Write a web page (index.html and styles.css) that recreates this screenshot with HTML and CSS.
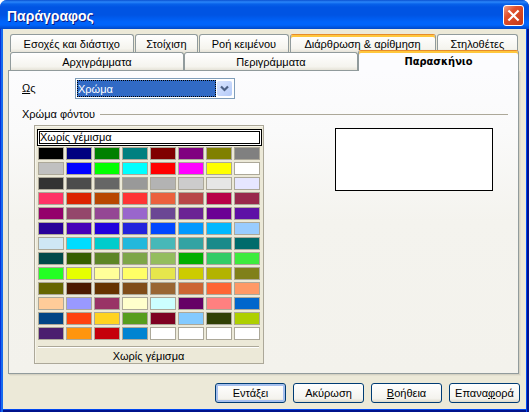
FILE: index.html
```html
<!DOCTYPE html>
<html lang="el">
<head>
<meta charset="utf-8">
<title>Παράγραφος</title>
<link rel="stylesheet" href="styles.css">
</head>
<body>
<main class="window">
  <header class="titlebar">
    <h1 class="title">Παράγραφος</h1>
    <button class="close" type="button" aria-label="Κλείσιμο">
      <svg width="19" height="19" viewBox="0 0 19 19"><path d="M5.2 5.2L13.8 13.8M13.8 5.2L5.2 13.8" stroke="#fff" stroke-width="2.2" stroke-linecap="square"/></svg>
    </button>
  </header>
  <div class="body">
    <nav class="tabs">
      <div class="tab-row">
        <button class="tab tab-indents" type="button">Εσοχές και διάστιχο</button>
        <button class="tab tab-align" type="button">Στοίχιση</button>
        <button class="tab tab-flow" type="button">Ροή κειμένου</button>
        <button class="tab tab-outline hot" type="button">Διάρθρωση &amp; αρίθμηση</button>
        <button class="tab tab-stops" type="button">Στηλοθέτες</button>
      </div>
      <div class="tab-row front">
        <button class="tab tab-wide" type="button">Αρχιγράμματα</button>
        <button class="tab tab-wide" type="button">Περιγράμματα</button>
        <button class="tab tab-active hot" type="button">Παρασκήνιο</button>
      </div>
    </nav>
    <section class="panel">
      <div class="field">
        <label for="as"><u>Ω</u>ς</label>
        <div class="combo">
          <select id="as"><option>Χρώμα</option></select>
          <span class="arrow"><svg width="9" height="7" viewBox="0 0 9 7"><path d="M1 1.5L4.5 5L8 1.5" fill="none" stroke="#4d6185" stroke-width="2.2"/></svg></span>
        </div>
      </div>
      <h2 class="group-title">Χρώμα φόντου</h2>
      <div class="group">
        <div class="palette">
          <button class="no-fill" type="button">Χωρίς γέμισμα</button>
          <div class="swatches" id="swatches"></div>
          <output class="color-name">Χωρίς γέμισμα</output>
        </div>
        <div class="preview"></div>
      </div>
    </section>
    <footer class="actions">
      <button class="btn default" type="button">Εντάξει</button>
      <button class="btn" type="button">Ακύρωση</button>
      <button class="btn" type="button"><u>Β</u>οήθεια</button>
      <button class="btn" type="button">Επανα<u>φ</u>ορά</button>
    </footer>
  </div>
</main>
<script src="palette.js"></script>
</body>
</html>
```
FILE: styles.css
```css
* { box-sizing: border-box; }
body {
  margin: 0;
  background: #fff;
  color: #000;
  font: 11px/14px "Liberation Sans", "DejaVu Sans", sans-serif;
}
button, select { font: inherit; color: inherit; margin: 0; padding: 0; }
.window {
  min-height: 100vh;
  display: flex;
  flex-direction: column;
  border-radius: 7px 7px 0 0;
  overflow: hidden;
  background: linear-gradient(90deg, #0831d9 1px, #166aee 1px, #0855dd 50%, #0048f1 calc(100% - 2px), #00138c calc(100% - 2px));
}
.titlebar {
  height: 29px;
  padding: 2px 5px 0 7px;
  display: flex;
  align-items: center;
  justify-content: space-between;
  background: linear-gradient(#0a50d0 0, #2a86fa 2px, #0862ea 4px, #0054e3 7px, #0054e3 15px, #0064fb 22px, #0064fb 25px, #0048c8 29px);
}
.title {
  margin: 0;
  font: bold 14px/18px "Liberation Sans", "DejaVu Sans", sans-serif;
  color: #fff;
  text-shadow: 1px 1px 0 #0a1883;
}
.close {
  width: 21px;
  height: 21px;
  border: 1px solid #fff;
  border-radius: 3px;
  display: grid;
  place-items: center;
  background: linear-gradient(135deg, #f0a088, #e0502c 35%, #c43818);
}
.body {
  flex: 1;
  display: flex;
  flex-direction: column;
  margin: 0 3px 3px;
  padding: 5px 6px 6px 5px;
  background: #ece9d8;
  box-shadow: 0 1px #0048f1, 0 3px #00138c;
}
.tabs { padding: 0 2px; }
.tab-row { display: flex; gap: 1px; }
.tab {
  height: 18px;
  min-width: 0;
  border: 1px solid #919b9c;
  border-bottom: 0;
  border-radius: 3px 3px 0 0;
  background: linear-gradient(#fff, #f5f4ee 80%, #e6e3d8);
  white-space: nowrap;
}
.tab-indents { flex: 124; }
.tab-align { flex: 63; }
.tab-flow { flex: 89; }
.tab-outline { flex: 147; }
.tab-stops { flex: 81; }
.front { gap: 0; align-items: flex-end; margin-right: -1px; }
.tab-wide { flex: 174; }
.hot { border-top: 1px solid #e68b2c; box-shadow: inset 0 2px #ffc73c; }
.tab-active {
  flex: 161;
  height: 21px;
  margin: -3px 0 -1px;
  padding-top: 2px;
  position: relative;
  background: #fcfcfe;
  font: bold 11px/14px "DejaVu Sans Condensed", "DejaVu Sans", sans-serif;
}
.panel {
  flex: 1;
  margin-right: 1px;
  padding: 7px 10px 8px 13px;
  border: 1px solid #919b9c;
  background: linear-gradient(#fcfcfe, #fafafa 20%, #f4f3ee 50%, #f3f2ec);
  box-shadow: 1px 1px #d5d2c3, 2px 2px #e3e0d0;
}
.field { display: flex; align-items: center; }
.field label { width: 53px; padding-bottom: 2px; }
.combo {
  width: 160px;
  height: 21px;
  display: flex;
  align-items: center;
  border: 1px solid #7f9db9;
  background: #fff;
  padding: 1px 2px 1px 1px;
  gap: 1px;
}
.combo select {
  flex: 1;
  height: 17px;
  appearance: none;
  border: 1px dotted #000;
  border-radius: 0;
  outline: 0;
  background: #316ac5;
  color: #fff;
}
.arrow {
  width: 15px;
  height: 15px;
  border-radius: 2px;
  display: grid;
  place-items: center;
  background: linear-gradient(135deg, #dbe6ff, #b4caf8);
}
.group-title {
  display: flex;
  align-items: center;
  gap: 5px;
  margin: 8px 0 4px;
  font-size: 11px;
  line-height: 14px;
  font-weight: normal;
}
.group-title::after { content: ""; flex: 1; height: 1px; background: #aca899; }
.group {
  display: flex;
  justify-content: space-between;
  align-items: flex-start;
  padding: 0 15px 0 12px;
}
.palette {
  width: 230px;
  padding: 3px 1px 0 2px;
  border: 1px solid #aca899;
  box-shadow: inset 1px 1px #f6f4ea;
  background: #ece9d8;
  display: flex;
  flex-direction: column;
}
.no-fill {
  height: 17px;
  border: 3px double #000;
  border-radius: 0;
  background: #fff;
  text-align: left;
  line-height: 11px;
}
.swatches {
  display: grid;
  grid-template-columns: repeat(8, 26px);
  gap: 2px;
  padding: 1px;
}
.swatch { height: 13px; border: 1px solid #aca899; border-radius: 0; }
.color-name {
  margin: 5px 3px 0 1px;
  padding: 2px 0 0;
  border-top: 1px solid #aca899;
  box-shadow: inset 0 1px #fff;
  text-align: center;
}
.preview { width: 158px; height: 63px; margin-top: 3px; border: 1px solid #000; background: #fff; }
.actions { display: flex; justify-content: flex-end; gap: 7px; padding-top: 9px; }
.btn {
  width: 71px;
  height: 20px;
  border: 1px solid #003c74;
  border-radius: 3px;
  background: linear-gradient(#fff, #f4f3ee 80%, #dcd8cb);
  white-space: nowrap;
}
.default { box-shadow: inset 0 0 0 2px #a6c0ee; }
```
FILE: palette.js
```js
const colors = `
000000 000080 008000 008080 800000 800080 808000 808080
c0c0c0 0000ff 00ff00 00ffff ff0000 ff00ff ffff00 ffffff
333333 4c4c4c 666666 999999 b3b3b3 cccccc e6e6e6 e6e6ff
ff3366 dc2300 b84700 ff3333 eb613d b84747 b80047 99284c
94006b 94476b 944794 9966cc 6b4794 6b2394 6b0094 5e11a6
280099 4700b8 2300dc 2323dc 0047ff 0099ff 00b8ff 99ccff
cfe7f5 00dcff 00cccc 23b8dc 47b8b8 33a3a3 198a8a 006b6b
004a4a 355e00 5c8526 7da647 94bd5e 00ae00 33cc66 3deb3d
23ff23 e6ff00 ffff99 ffff66 e6e64c cccc00 b3b300 80801a
666600 4c1900 663300 804c19 996633 cc6633 ff6633 ff9966
ffcc99 9999ff 993366 ffffcc ccffff 660066 ff8080 0066cc
004586 ff420e ffd320 579d1c 7e0021 83caff 314004 aecf00
4b1f6f ff950e c5000b 0084d1 ffffff ffffff ffffff ffffff`.trim().split(/\s+/);

const holder = document.getElementById("swatches");
for (const color of colors) {
  const swatch = document.createElement("button");
  swatch.type = "button";
  swatch.className = "swatch";
  swatch.style.background = "#" + color;
  swatch.setAttribute("aria-label", "#" + color);
  holder.append(swatch);
}
```
